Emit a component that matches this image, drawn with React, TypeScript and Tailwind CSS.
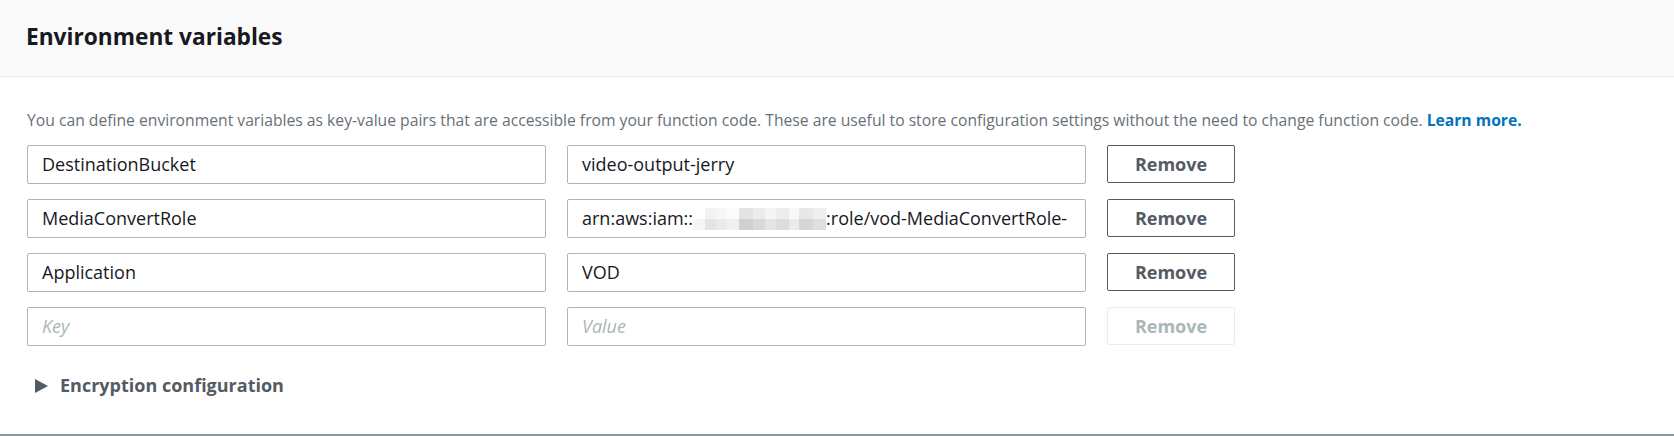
import React from "react";

const font = { fontFamily: '"Open Sans", "Noto Sans", Arial, sans-serif' };

function Redacted() {
  const blocks = [
    { w: 12, c: "bg-[#ffffff]" },
    { w: 11, c: "bg-[#eeeeee]" },
    { w: 10, c: "bg-[#f4f4f4]" },
    { w: 13, c: "bg-[#fafafa]" },
    { w: 14, c: "bg-[#d9d9d9]" },
    { w: 12, c: "bg-[#e2e2e2]" },
    { w: 11, c: "bg-[#efefef]" },
    { w: 13, c: "bg-[#e6e6e6]" },
    { w: 10, c: "bg-[#f5f5f5]" },
    { w: 14, c: "bg-[#dfdfdf]" },
    { w: 13, c: "bg-[#e9e9e9]" },
  ];
  return (
    <span className="inline-flex h-[22px] items-stretch align-middle">
      {blocks.map((b, i) => (
        <span key={i} className={`flex flex-col ${b.c}`} style={{ width: b.w }}>
          <span className="h-1/2 w-full bg-[#ffffff]/30" />
          <span className="h-1/2 w-full bg-[#000000]/[0.04]" />
        </span>
      ))}
    </span>
  );
}

function Field({ children, placeholder }: { children?: React.ReactNode; placeholder?: string }) {
  return (
    <div className="flex h-[39px] w-[519px] shrink-0 items-center overflow-hidden whitespace-nowrap rounded-[2px] border border-[#aab7b8] bg-white px-[14px] text-[18px] text-[#16191f]">
      {children ?? <span className="italic text-[#aab7b8]">{placeholder}</span>}
    </div>
  );
}

function RemoveBtn({ disabled }: { disabled?: boolean }) {
  return (
    <div
      className={
        "flex h-[38px] w-[128px] shrink-0 items-center justify-center rounded-[2px] border bg-white text-[18px] font-bold " +
        (disabled ? "border-[#eaeded] text-[#aab7b8]" : "border-[#545b64] text-[#545b64]")
      }
    >
      Remove
    </div>
  );
}

function Row({ k, v, disabled }: { k?: React.ReactNode; v?: React.ReactNode; disabled?: boolean }) {
  return (
    <div className="flex items-start gap-[21px]">
      <Field placeholder="Key">{k}</Field>
      <Field placeholder="Value">{v}</Field>
      <RemoveBtn disabled={disabled} />
    </div>
  );
}

export default function App() {
  return (
    <div className="h-[436px] w-full overflow-hidden bg-white" style={font}>
      <div className="flex h-[434px] flex-col">
        <div className="flex h-[77px] items-center border-b border-[#eaeded] bg-[#fafafa] px-[26px] pb-[2px]">
          <h2 className="text-[22.7px] font-bold text-[#16191f]">Environment variables</h2>
        </div>
        <div className="px-[27px] pt-[33px]">
          <p className="whitespace-nowrap text-[15.7px] leading-[20px] text-[#687078]">
            You can define environment variables as key-value pairs that are accessible from your function code. These
            are useful to store configuration settings without the need to change function code.{" "}
            <span className="font-bold text-[#0073bb]">Learn more.</span>
          </p>
          <div className="mt-[15px] flex flex-col gap-[15px]">
            <Row k="DestinationBucket" v="video-output-jerry" />
            <Row
              k="MediaConvertRole"
              v={
                <>
                  <span>arn:aws:iam::</span>
                  <Redacted />
                  <span>:role/vod-MediaConvertRole-</span>
                </>
              }
            />
            <Row k="Application" v="VOD" />
            <Row disabled />
          </div>
          <div className="mt-[26px] flex items-center gap-[12px] pl-[8px]">
            <svg width="13" height="14" viewBox="0 0 13 14">
              <polygon points="0,0 13,7 0,14" fill="#545b64" />
            </svg>
            <span className="text-[18px] font-bold text-[#545b64]">Encryption configuration</span>
          </div>
        </div>
      </div>
      <div className="h-[2px] w-full bg-[#8d9599]" />
    </div>
  );
}
